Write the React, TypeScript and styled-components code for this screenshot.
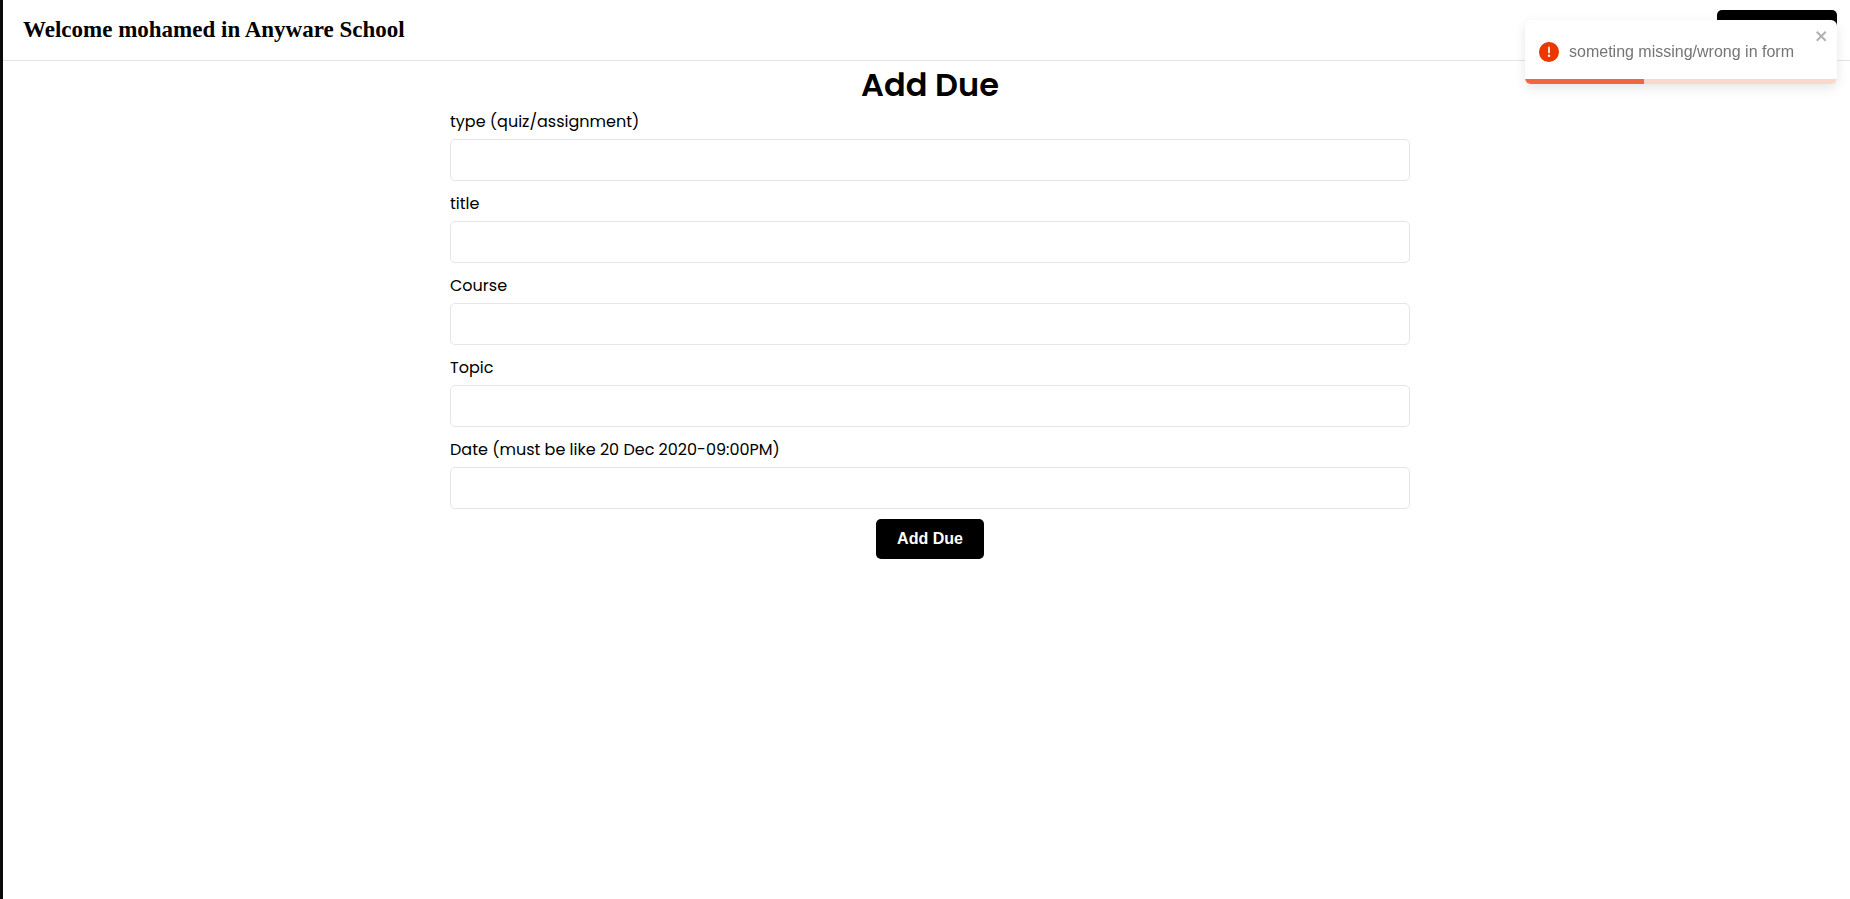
import React from "react";
import styled, { createGlobalStyle } from "styled-components";

const GlobalStyle = createGlobalStyle`
  * { box-sizing: border-box; }
  body {
    margin: 0;
    background: #fff;
    color: #000;
    font-family: Poppins, Inter, "Open Sans", sans-serif;
    font-size: 16px;
    line-height: 26px;
  }
`;

const Layout = styled.div`
  display: flex;
  min-height: 100vh;
`;

const Sidebar = styled.aside`
  flex: none;
  width: 3px;
  background: #0a0a0a;
`;

const Page = styled.div`
  flex: 1;
  min-width: 0;
`;

const Header = styled.header`
  display: flex;
  align-items: center;
  justify-content: space-between;
  padding: 10px 13px 10px 20px;
  border-bottom: 1px solid #e5e5e5;
`;

const Welcome = styled.h2`
  margin: 0;
  font-family: "Liberation Serif", serif;
  font-size: 23px;
  line-height: 28px;
  font-weight: 700;
`;

const Button = styled.button<{ $width: number }>`
  width: ${(p) => p.$width}px;
  height: 40px;
  padding: 0;
  border: 0;
  border-radius: 5px;
  background: #000;
  color: #fff;
  font-family: "Liberation Sans", sans-serif;
  font-size: 16px;
  font-weight: 700;
  cursor: pointer;
`;

const Main = styled.main`
  display: flex;
  justify-content: center;
  padding-left: 7px;
`;

const Form = styled.form`
  display: flex;
  flex-direction: column;
  align-items: center;
  width: 100%;
  max-width: 960px;
`;

const Title = styled.h1`
  margin: 0;
  font-size: 32px;
  line-height: 48px;
  font-weight: 600;
`;

const Field = styled.div`
  display: flex;
  flex-direction: column;
  gap: 4px;
  width: 100%;
  margin-bottom: 10px;
`;

const Input = styled.input`
  width: 100%;
  height: 42px;
  padding: 0 10px;
  border: 1px solid #e5e5e5;
  border-radius: 5px;
  background: #fff;
  font: inherit;
  outline: none;
`;

const Toast = styled.div`
  position: fixed;
  top: 20px;
  right: 13px;
  display: flex;
  align-items: center;
  gap: 10px;
  width: 312px;
  height: 64px;
  padding: 8px 14px;
  overflow: hidden;
  border-radius: 6px;
  background: #fff;
  box-shadow: 0 4px 12px rgba(0, 0, 0, 0.1);
  color: #757575;
  font-family: "Liberation Sans", sans-serif;
`;

const ToastIcon = styled.svg`
  flex: none;
  width: 20px;
  height: 20px;
`;

const CloseButton = styled.button`
  position: absolute;
  top: 8px;
  right: 8px;
  display: flex;
  padding: 0;
  border: 0;
  background: transparent;
  color: #000;
  opacity: 0.3;
  cursor: pointer;
`;

const Progress = styled.div`
  position: absolute;
  right: 0;
  bottom: 0;
  left: 0;
  height: 5px;
  background: #fbd7cc;
`;

const ProgressBar = styled.div`
  width: 38%;
  height: 100%;
  background: #f1663e;
`;

const fields = [
  { id: "type", label: "type (quiz/assignment)" },
  { id: "title", label: "title" },
  { id: "course", label: "Course" },
  { id: "topic", label: "Topic" },
  { id: "date", label: "Date (must be like 20 Dec 2020-09:00PM)" },
];

export default function App() {
  return (
    <>
      <GlobalStyle />
      <Layout>
        <Sidebar />
        <Page>
          <Header>
            <Welcome>Welcome mohamed in Anyware School</Welcome>
            <Button type="button" $width={120} aria-label="Log out" />
          </Header>
          <Main>
            <Form onSubmit={(e) => e.preventDefault()}>
              <Title>Add Due</Title>
              {fields.map((f) => (
                <Field key={f.id}>
                  <label htmlFor={f.id}>{f.label}</label>
                  <Input id={f.id} name={f.id} type="text" />
                </Field>
              ))}
              <Button type="submit" $width={108}>Add Due</Button>
            </Form>
          </Main>
        </Page>
      </Layout>
      <Toast role="alert">
        <ToastIcon viewBox="0 0 24 24" fill="#ea3800" aria-hidden="true">
          <path d="M11.983 0a12.206 12.206 0 00-8.51 3.653A11.8 11.8 0 000 12.207 11.779 11.779 0 0011.8 24h.214A12.111 12.111 0 0024 11.791 11.766 11.766 0 0011.983 0zM10.5 16.542a1.476 1.476 0 011.449-1.53h.027a1.527 1.527 0 011.523 1.47 1.475 1.475 0 01-1.449 1.53h-.027a1.529 1.529 0 01-1.523-1.47zM11 12.5v-6a1 1 0 012 0v6a1 1 0 11-2 0z" />
        </ToastIcon>
        <span>someting missing/wrong in form</span>
        <CloseButton type="button" aria-label="Close">
          <svg width="14" height="16" viewBox="0 0 14 16" fill="currentColor" aria-hidden="true">
            <path fillRule="evenodd" d="M7.71 8.23l3.75 3.75-1.48 1.48-3.75-3.75-3.75 3.75L1 11.98l3.75-3.75L1 4.48 2.48 3l3.75 3.75L9.98 3l1.48 1.48-3.75 3.75z" />
          </svg>
        </CloseButton>
        <Progress>
          <ProgressBar />
        </Progress>
      </Toast>
    </>
  );
}
